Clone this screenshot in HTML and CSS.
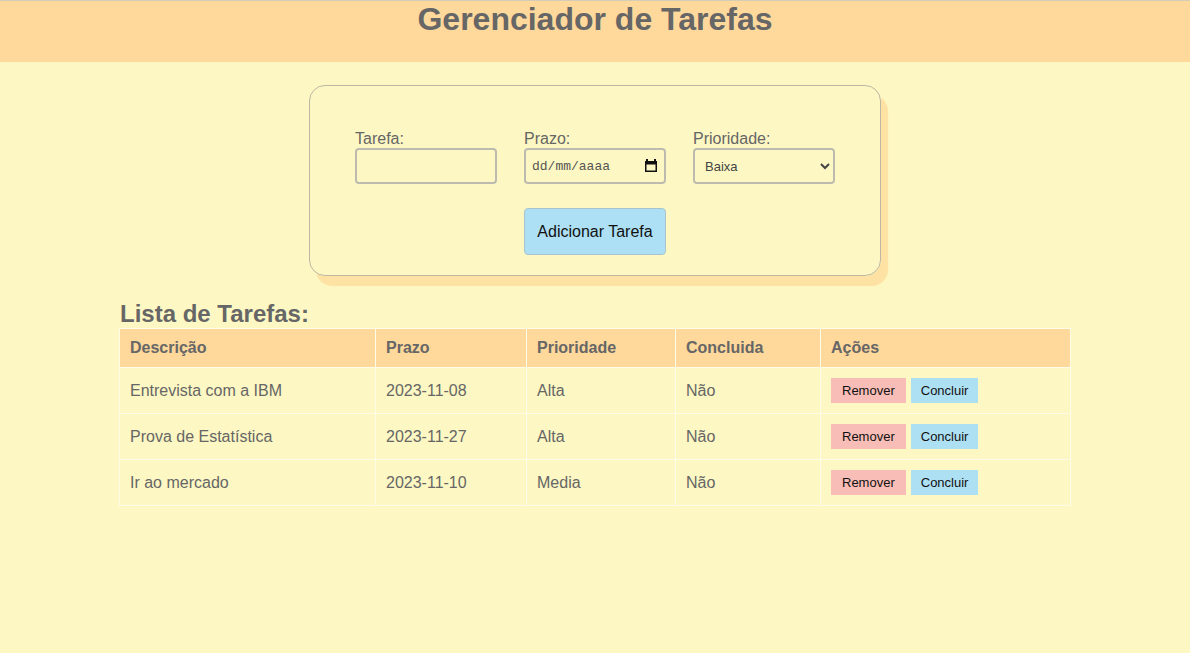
FILE: index.html
```html
<!DOCTYPE html>
<html lang="pt-BR">
<head>
<meta charset="utf-8">
<title>Gerenciador de Tarefas</title>
<link rel="stylesheet" href="styles.css">
</head>
<body>
<header class="topbar">
  <h1 class="title">Gerenciador de Tarefas</h1>
</header>

<main>
  <form class="card">
    <div class="form-grid">
      <div class="field">
        <label class="label" for="tarefa">Tarefa:</label>
        <input class="control" id="tarefa" type="text">
      </div>
      <div class="field">
        <label class="label" for="prazo">Prazo:</label>
        <div class="date-wrap">
          <input class="control date" id="prazo" type="text" placeholder="dd/mm/aaaa">
          <svg class="cal-icon" width="12" height="13" viewBox="0 0 12 13" aria-hidden="true">
            <rect x="1" y="0" width="2" height="2" fill="#111"/>
            <rect x="9" y="0" width="2" height="2" fill="#111"/>
            <path d="M0 2h12v11H0z M1.5 5.5v6h9v-6z" fill="#111" fill-rule="evenodd"/>
          </svg>
        </div>
      </div>
      <div class="field">
        <label class="label" for="prioridade">Prioridade:</label>
        <select class="control select" id="prioridade">
          <option>Baixa</option>
          <option>Media</option>
          <option>Alta</option>
        </select>
      </div>
      <button type="button" class="add-btn">Adicionar Tarefa</button>
    </div>
  </form>

  <section class="list">
    <h2 class="list-title">Lista de Tarefas:</h2>
    <table class="tasks">
      <colgroup>
        <col class="c-desc"><col class="c-prazo"><col class="c-prio"><col class="c-done"><col class="c-acts">
      </colgroup>
      <thead>
        <tr><th>Descrição</th><th>Prazo</th><th>Prioridade</th><th>Concluida</th><th>Ações</th></tr>
      </thead>
      <tbody>
        <tr>
          <td>Entrevista com a IBM</td><td>2023-11-08</td><td>Alta</td><td>Não</td>
          <td><div class="acts"><button type="button" class="btn remove">Remover</button><button type="button" class="btn done">Concluir</button></div></td>
        </tr>
        <tr>
          <td>Prova de Estatística</td><td>2023-11-27</td><td>Alta</td><td>Não</td>
          <td><div class="acts"><button type="button" class="btn remove">Remover</button><button type="button" class="btn done">Concluir</button></div></td>
        </tr>
        <tr>
          <td>Ir ao mercado</td><td>2023-11-10</td><td>Media</td><td>Não</td>
          <td><div class="acts"><button type="button" class="btn remove">Remover</button><button type="button" class="btn done">Concluir</button></div></td>
        </tr>
      </tbody>
    </table>
  </section>
</main>
</body>
</html>
```

FILE: styles.css
```css
* { box-sizing: border-box; }

html, body {
  margin: 0;
  padding: 0;
  background: #fdf8c3;
  font-family: "Liberation Sans", Arial, sans-serif;
  color: #666;
}

.topbar {
  background: #ffd89b;
  height: 62px;
  border-top: 1px solid #d6cdb9;
}

.title {
  margin: 0;
  font-size: 32px;
  line-height: 37px;
  font-weight: bold;
  text-align: center;
  color: #666;
}

.card {
  width: 572px;
  margin: 23px auto 0;
  padding: 44px 45px 20px;
  border: 1px solid #bcb8a4;
  border-radius: 16px;
  box-shadow: 7px 10px 1px #fde2a4;
}

.form-grid {
  display: grid;
  grid-template-columns: repeat(3, 142px);
  justify-content: space-between;
  row-gap: 24px;
}

.label {
  display: block;
  font-size: 16px;
  line-height: 18px;
  margin-bottom: 0;
  color: #666;
}

.control {
  display: block;
  width: 142px;
  height: 36px;
  margin: 0;
  border: 2px solid #bdbbb0;
  border-radius: 4px;
  background: #fdf8c3;
  font-family: "Liberation Sans", Arial, sans-serif;
  font-size: 13px;
  color: #444;
  outline: none;
}

.date-wrap {
  position: relative;
  width: 142px;
}

.date {
  padding: 0 0 0 6px;
  font-family: "Liberation Mono", "DejaVu Sans Mono", monospace;
  font-size: 13px;
}

.date::placeholder {
  color: #555;
}

.cal-icon {
  position: absolute;
  right: 9px;
  top: 11px;
}

.select {
  padding: 0 6px;
}

.add-btn {
  grid-column: 2;
  width: 142px;
  height: 47px;
  padding: 0;
  border: 1px solid #a9c4cf;
  border-radius: 4px;
  background: #ade0f5;
  font-family: "Liberation Sans", Arial, sans-serif;
  font-size: 16px;
  color: #111;
}

.list {
  width: 80%;
  margin: 0 auto;
}

.list-title {
  margin: 24px 0 1px;
  padding-left: 1px;
  font-size: 24px;
  line-height: 27px;
  font-weight: bold;
  color: #666;
}

.tasks {
  width: 100%;
  table-layout: fixed;
  border-collapse: collapse;
  border: 1px solid #fefce6;
}

.c-desc { width: 256px; }
.c-prazo { width: 151px; }
.c-prio { width: 149px; }
.c-done { width: 145px; }
.c-acts { width: 250px; }

.tasks th,
.tasks td {
  border: 1px solid #fefce6;
  text-align: left;
  font-size: 16px;
  line-height: 18px;
  padding: 10px 10px;
  color: #666;
}

.tasks th {
  background: #ffd89b;
  font-weight: bold;
  padding: 10px 10px 10px;
}

.tasks td {
  height: 46px;
}

.acts {
  display: flex;
  gap: 5px;
}

.btn {
  height: 25px;
  padding: 0 10px;
  border: none;
  font-family: "Liberation Sans", Arial, sans-serif;
  font-size: 13px;
  color: #111;
}

.remove {
  background: #f8bdb6;
  padding: 0 11px;
}

.done {
  background: #aee0f4;
}
```
